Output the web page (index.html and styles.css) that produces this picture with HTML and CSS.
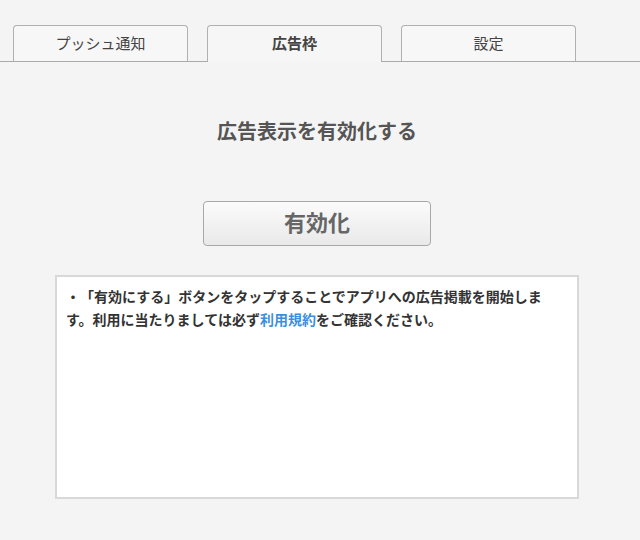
FILE: index.html
```html
<!DOCTYPE html>
<html lang="ja">
<head>
    <meta charset="UTF-8">
    <meta name="viewport" content="width=device-width, initial-scale=1.0">
    <title>広告枠</title>
    <link rel="stylesheet" href="styles.css">
</head>
<body>
    <div class="tabs">
        <div class="tab">プッシュ通知</div>
        <div class="tab active">広告枠</div>
        <div class="tab">設定</div>
    </div>

    <div class="content">
        <h1 class="title">広告表示を有効化する</h1>
        <button class="enable-btn">有効化</button>
        <div class="notice">
            <p>・「有効にする」ボタンをタップすることでアプリへの広告掲載を開始します。利用に当たりましては必ず<a href="#">利用規約</a>をご確認ください。</p>
        </div>
    </div>
</body>
</html>
```

FILE: styles.css
```css
body {
    margin: 0;
    padding: 0;
    background-color: #f4f4f4;
    font-family: "Noto Sans CJK JP", sans-serif;
    color: #444;
    text-spacing-trim: space-all;
}
.tabs {
    display: flex;
    gap: 19px;
    padding: 25px 0 0 13px;
    border-bottom: 1px solid #aaa;
    height: 36px;
}
.tab {
    box-sizing: border-box;
    width: 175px;
    height: 36px;
    border: 1px solid #b0b0b0;
    border-bottom: none;
    border-radius: 4px 4px 0 0;
    background-color: #f7f7f7;
    font-size: 15px;
    line-height: 33px;
    text-align: center;
    color: #444;
}
.tab.active {
    position: relative;
    height: 37px;
    font-weight: bold;
    background-color: #f6f6f6;
    z-index: 1;
}
.content {
    display: flex;
    flex-direction: column;
    align-items: center;
    padding-right: 6px;
}
.title {
    margin: 57px 0 0;
    font-size: 20px;
    line-height: 24px;
    font-weight: bold;
    color: #555;
}
.enable-btn {
    margin-top: 58px;
    width: 228px;
    height: 45px;
    padding: 0 0 5px;
    border: 1px solid #a8a8a8;
    border-radius: 4px;
    background: linear-gradient(#fbfbfb, #e9e9e9);
    font-family: inherit;
    font-size: 22px;
    font-weight: bold;
    color: #666;
}
.notice {
    box-sizing: border-box;
    margin-top: 29px;
    width: 524px;
    height: 224px;
    background-color: #fff;
    border: 2px solid #d8d8d8;
    padding: 8px 34px 10px 9px;
}
.notice p {
    margin: 0;
    font-size: 14px;
    line-height: 23px;
    font-weight: bold;
    color: #333;
}
.notice a {
    color: #3a8fe0;
    text-decoration: none;
}
```
